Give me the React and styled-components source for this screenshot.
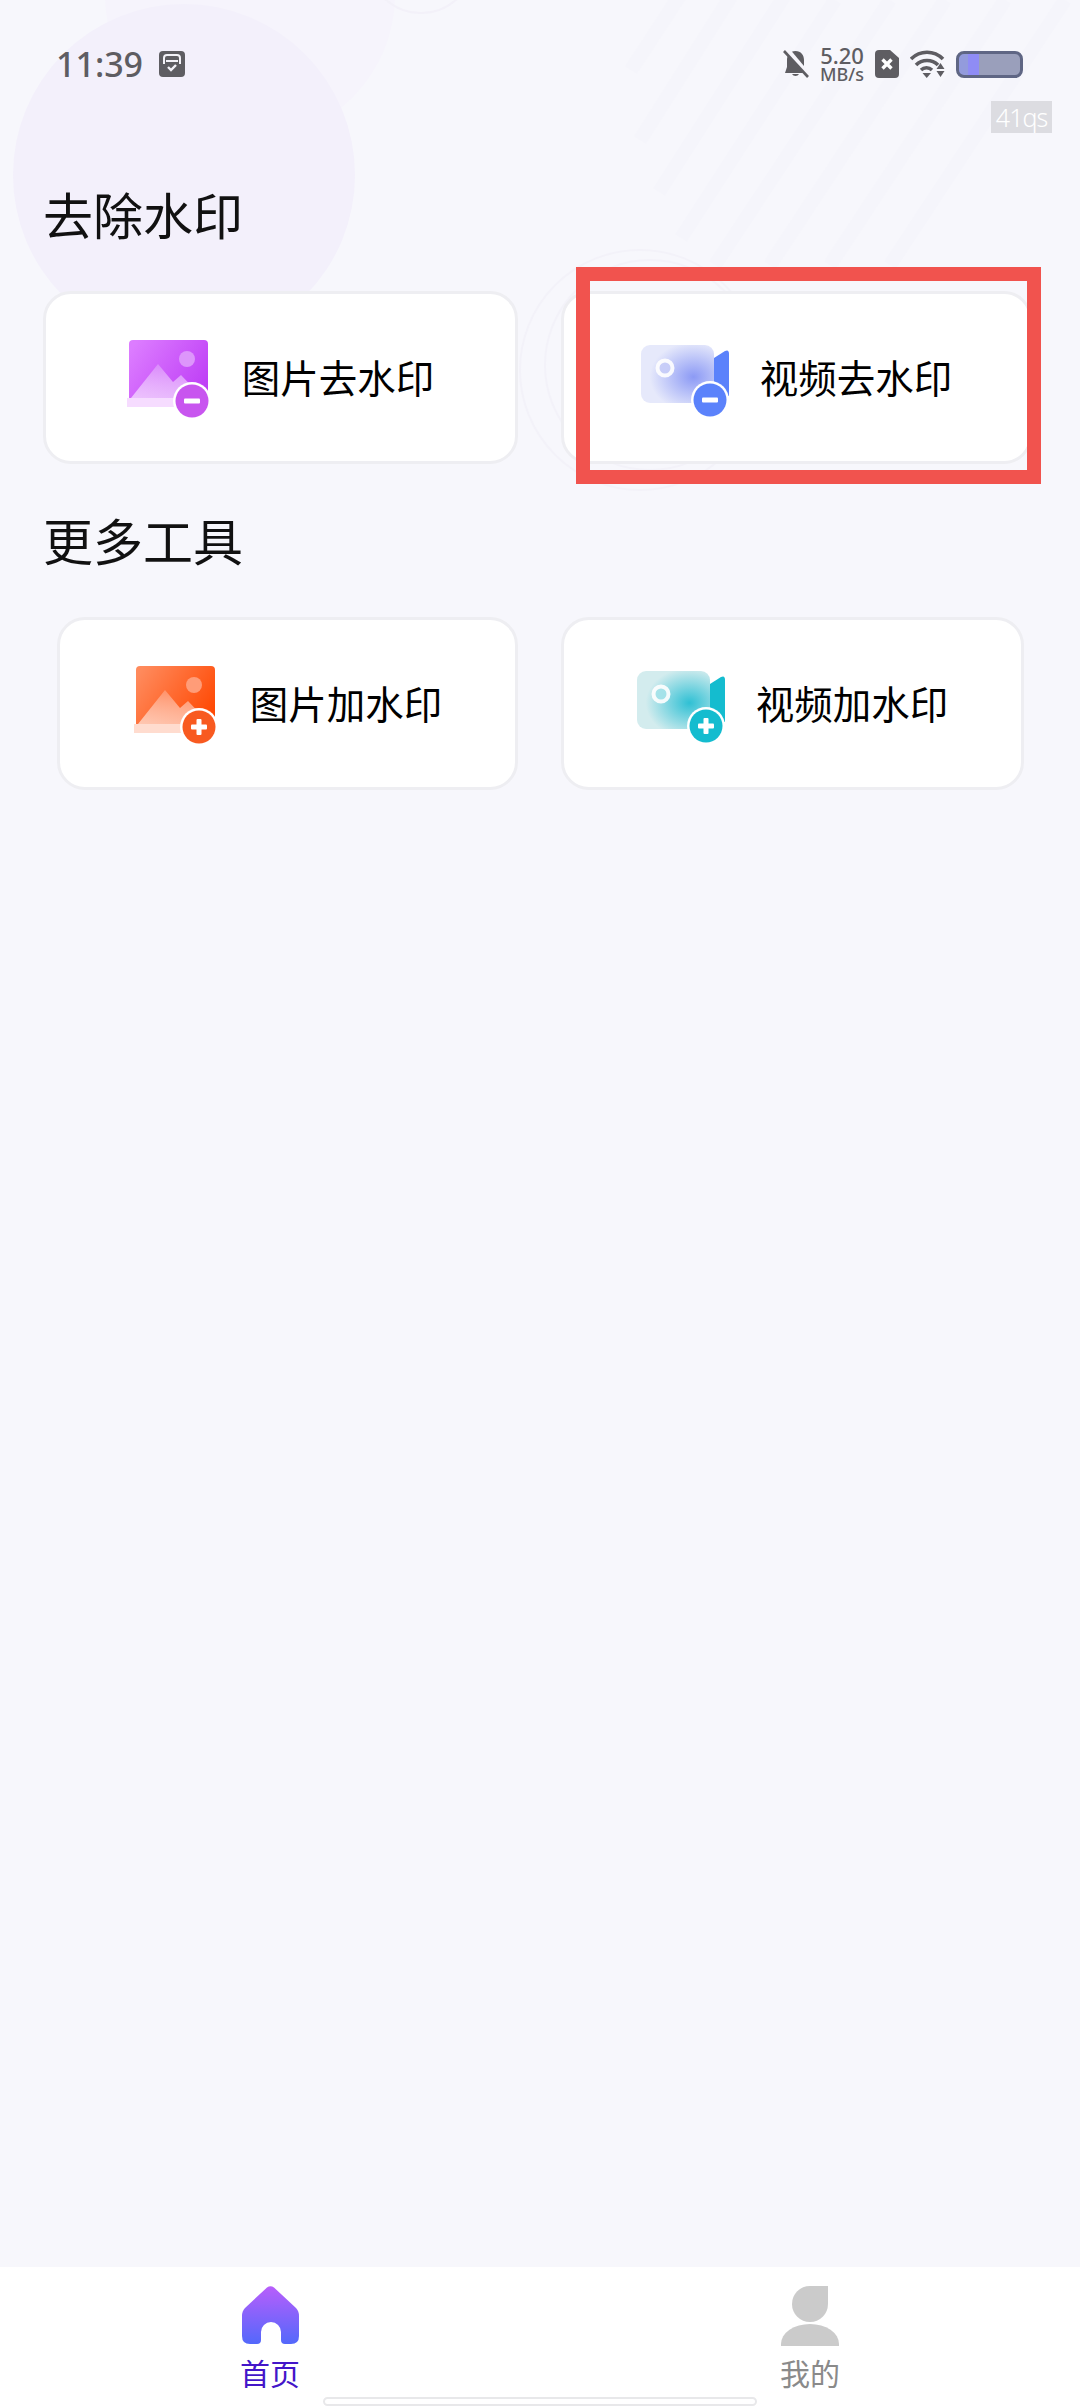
import React from "react"
import styled, { createGlobalStyle } from "styled-components"

const GlobalStyle = createGlobalStyle`
    html, body {
        margin: 0;
        padding: 0;
        background: #f7f7fc;
    }
    * {
        box-sizing: border-box;
    }
`

const Page = styled.div`
    position: relative;
    width: 1080px;
    height: 2408px;
    overflow: hidden;
    display: flex;
    flex-direction: column;
    background: #f7f7fc;
    font-family: "Noto Sans CJK SC", "Noto Sans", sans-serif;
`

const Backdrop = styled.svg`
    position: absolute;
    top: 0;
    left: 0;
`

const StatusBar = styled.div`
    position: relative;
    height: 181px;
    padding: 47px 57px 0 56px;
    display: flex;
    justify-content: space-between;
    align-items: flex-start;
    color: #5e5d62;
`

const StatusGroup = styled.div`
    display: flex;
    align-items: center;
    height: 34px;
    gap: ${({ $gap }) => $gap};
`

const Clock = styled.span`
    font-family: "Noto Sans", sans-serif;
    font-size: 34px;
    line-height: 34px;
    font-weight: 500;
    width: 87px;
`

const Speed = styled.div`
    display: flex;
    flex-direction: column;
    align-items: center;
    width: 44px;
    font-family: "Noto Sans", sans-serif;
    font-weight: 500;
`

const SpeedValue = styled.span`
    font-size: 22px;
    line-height: 20px;
`

const SpeedUnit = styled.span`
    font-size: 18px;
    line-height: 18px;
`

const Battery = styled.div`
    width: 67px;
    height: 27px;
    border: 3px solid #5f6684;
    border-radius: 8px;
    background: linear-gradient(to right, #939bdc 0 9px, #8f8cf5 9px 20px, #9a9fbb 20px);
`

const Fps = styled.div`
    position: absolute;
    top: 101px;
    left: 991px;
    width: 61px;
    height: 32px;
    background: #dcdce1;
    color: #fff;
    font-family: "Noto Sans", sans-serif;
    font-weight: 300;
    font-size: 25px;
    letter-spacing: -1px;
    line-height: 33px;
    text-align: center;
`

const Main = styled.main`
    position: relative;
    flex: 1;
`

const Heading = styled.h2`
    margin: ${({ $top }) => $top}px 0 40px 43px;
    height: 70px;
    font-size: 50px;
    line-height: 64px;
    font-weight: 400;
    color: #111;
`

const Row = styled.div`
    display: flex;
    gap: 43px;
    padding-left: ${({ $left }) => $left}px;
`

const Card = styled.div`
    width: ${({ $width }) => $width}px;
    height: 173px;
    display: flex;
    align-items: center;
    justify-content: center;
    gap: 31px;
    background: #fff;
    border: 3px solid #eeeef2;
    border-radius: 28px;
`

const CardLabel = styled.span`
    font-size: 38.5px;
    line-height: 50px;
    padding-bottom: 3px;
    color: #000;
`

const IconSvg = styled.svg`
    display: block;
    flex: none;
    filter: blur(0.4px);
`

const Highlight = styled.div`
    position: absolute;
    top: 267px;
    left: 576px;
    width: 465px;
    height: 217px;
    border: 14px solid #f1534e;
`

const TabBar = styled.nav`
    position: relative;
    height: 141px;
    padding-top: 19px;
    display: grid;
    grid-template-columns: 1fr 1fr;
    background: #fff;
`

const Tab = styled.div`
    display: flex;
    flex-direction: column;
    align-items: center;
    gap: 6px;
`

const TabIconBox = styled.div`
    height: 60px;
`

const TabLabel = styled.span`
    font-size: 30px;
    line-height: 40px;
    color: ${({ $active }) => ($active ? "#4316c9" : "#8a8a8a")};
`

const HomeIndicator = styled.div`
    position: absolute;
    left: 323px;
    bottom: 2px;
    width: 434px;
    height: 9px;
    background: #fff;
    border: 2px solid #e8e8ea;
    border-radius: 5px;
`

const Badge = ({ cx, cy, color, plus }) => (
    <g>
        <circle cx={cx} cy={cy} r="19" fill="#fff" />
        <circle cx={cx} cy={cy} r="16.5" fill={color} />
        <rect x={cx - 8} y={cy - 2.5} width="16" height="5" rx="1" fill="#fff" />
        {plus && <rect x={cx - 2.5} y={cy - 8} width="5" height="16" rx="1" fill="#fff" />}
    </g>
)

const ImageIcon = ({ id, from, to, badge, plate, mountain, plus, width = 84 }) => (
    <IconSvg width={width} height="80" viewBox="0 0 84 80">
        <defs>
            <linearGradient id={`${id}-body`} x1="0" y1="0.2" x2="1" y2="0.7">
                <stop offset="0" stopColor={from} />
                <stop offset="1" stopColor={to} />
            </linearGradient>
            <linearGradient id={`${id}-peak`} x1="0" y1="0" x2="0" y2="1">
                <stop offset="0" stopColor={mountain} stopOpacity="0.75" />
                <stop offset="1" stopColor="#fff" stopOpacity="0.6" />
            </linearGradient>
        </defs>
        <rect x="0" y="60" width="60" height="9" fill={plate} />
        <path d="M2 6 Q2 2 6 2 H77 Q81 2 81 6 V60 H2 Z" fill={`url(#${id}-body)`} />
        <circle cx="60" cy="21" r="8" fill={mountain} />
        <path d="M4 60 L31 26 L46 44 L54 37 L72 56 V60 Z" fill={`url(#${id}-peak)`} />
        <Badge cx={65} cy={63} color={badge} plus={plus} />
    </IconSvg>
)

const VideoIcon = ({ id, pale, core, accent, ring, plus }) => (
    <IconSvg width="88" height="80" viewBox="0 0 88 80">
        <defs>
            <radialGradient id={`${id}-body`} cx="0.72" cy="0.55" r="0.6">
                <stop offset="0" stopColor={core} />
                <stop offset="1" stopColor={pale} />
            </radialGradient>
        </defs>
        <rect x="0" y="7" width="73" height="58" rx="9" fill={`url(#${id}-body)`} />
        <circle cx="24" cy="30" r="7.5" fill={ring} stroke="#fff" strokeWidth="4" opacity="0.9" />
        <path d="M73 20 L84 13 Q88 11 88 16 V58 H73 Z" fill={accent} />
        <Badge cx={69} cy={62} color={accent} plus={plus} />
    </IconSvg>
)

const NotifyIcon = () => (
    <svg width="28" height="28" viewBox="0 0 28 28">
        <rect x="1" y="1" width="26" height="26" rx="4" fill="#5e5d62" />
        <path d="M6 14 V8 Q6 5 9 5 H19 Q22 5 22 8 V14" stroke="#f3f2f8" strokeWidth="2" fill="none" />
        <path d="M8 11 H20" stroke="#f3f2f8" strokeWidth="2" fill="none" />
        <path d="M10 17 L13 20 L18 15" stroke="#f3f2f8" strokeWidth="2.4" fill="none" />
    </svg>
)

const MuteIcon = () => (
    <svg width="26" height="28" viewBox="0 0 26 28">
        <path d="M12.5 1 C18 1 21 5 21 10 V17 L24 23 H2 L4 17 V10 C4 5 7 1 12.5 1 Z" fill="#5e5d62" />
        <path d="M9 24 A4 4 0 0 0 16 24 Z" fill="#5e5d62" />
        <path d="M3.5 -1 L26 26" stroke="#f6f5fb" strokeWidth="5" />
        <path d="M1 1 L25 27" stroke="#5e5d62" strokeWidth="2.6" />
    </svg>
)

const SimIcon = () => (
    <svg width="24" height="28" viewBox="0 0 24 28">
        <path d="M4 0 H15 L24 8 V24 Q24 28 20 28 H4 Q0 28 0 24 V4 Q0 0 4 0 Z" fill="#5e5d62" />
        <path d="M7.5 9.5 L16.5 18.5 M16.5 9.5 L7.5 18.5" stroke="#fff" strokeWidth="3.4" />
    </svg>
)

const WifiIcon = () => (
    <svg width="35" height="28" viewBox="0 0 35 28">
        <path d="M1 9 C10 0 24 0 33 9" fill="none" stroke="#5e5d62" strokeWidth="3.6" />
        <path d="M6 15 C12 9 22 9 28 15" fill="none" stroke="#5e5d62" strokeWidth="3.6" />
        <path d="M11 20 C14 17 19 17 22 20" fill="none" stroke="#5e5d62" strokeWidth="3.4" />
        <path d="M12.5 23 H21 L16.7 28 Z" fill="#5e5d62" />
        <path d="M30.5 13 L34.5 19 H26.5 Z M26.5 21 H34.5 L30.5 27 Z" fill="#5e5d62" />
    </svg>
)

const HomeIcon = () => (
    <svg width="57" height="58" viewBox="0 0 57 58">
        <defs>
            <linearGradient id="home-fill" x1="0" y1="0" x2="0" y2="1">
                <stop offset="0" stopColor="#b85efb" />
                <stop offset="1" stopColor="#5368fb" />
            </linearGradient>
        </defs>
        <path
            d="M25 1.5 Q28.5 -1 32 1.5 L54 22 Q57 25 57 30 V50 Q57 58 49 58 H43 Q39 58 39 54 V46 A10 10 0 0 0 19 46 V54 Q19 58 15 58 H8 Q0 58 0 50 V30 Q0 25 3 22 Z"
            fill="url(#home-fill)"
        />
    </svg>
)

const PersonIcon = () => (
    <svg width="58" height="60" viewBox="0 0 58 60">
        <path d="M29 0 H47 V18 A18 18 0 1 1 11 18 A18 18 0 0 1 29 0 Z" fill="#cbcbcb" />
        <path d="M0 60 V58 A29 20 0 0 1 58 58 V60 Z" fill="#cbcbcb" />
    </svg>
)

const stripes = [
    [631, 70, 690, -20],
    [640, 140, 735, -10],
    [659, 192, 785, -5],
    [681, 238, 835, 0],
    [715, 265, 890, 0],
    [770, 265, 945, 0],
    [830, 265, 1005, 0],
    [890, 265, 1065, 0],
]

const App = () => {
    return (
        <Page>
            <GlobalStyle />
            <Backdrop width="1080" height="560" viewBox="0 0 1080 560">
                <circle cx="250" cy="-5" r="145" fill="#f6f4fc" />
                <circle cx="184" cy="175" r="171" fill="#f3f0fb" />
                <circle cx="421" cy="-40" r="53" fill="none" stroke="#f3f1f9" strokeWidth="2" />
                <circle cx="640" cy="370" r="120" fill="none" stroke="#f3f2f9" strokeWidth="2" />
                <circle cx="650" cy="365" r="105" fill="none" stroke="#f3f2f9" strokeWidth="2" />
                {stripes.map(([x1, y1, x2, y2]) => (
                    <line key={x1} x1={x1} y1={y1} x2={x2} y2={y2} stroke="#f5f5fb" strokeWidth="14" />
                ))}
            </Backdrop>

            <StatusBar>
                <StatusGroup $gap="15px">
                    <Clock>11:39</Clock>
                    <NotifyIcon />
                </StatusGroup>
                <StatusGroup $gap="11px">
                    <MuteIcon />
                    <Speed>
                        <SpeedValue>5.20</SpeedValue>
                        <SpeedUnit>MB/s</SpeedUnit>
                    </Speed>
                    <SimIcon />
                    <WifiIcon />
                    <Battery />
                </StatusGroup>
            </StatusBar>
            <Fps>41qs</Fps>

            <Main>
                <Heading $top={0}>去除水印</Heading>
                <Row $left={43}>
                    <Card $width={475}>
                        <ImageIcon id="remove-image" from="#dc7cff" to="#bf40f6" badge="#c855ef" plate="#f6dcff" mountain="#dd96fb" />
                        <CardLabel>图片去水印</CardLabel>
                    </Card>
                    <Card $width={471}>
                        <VideoIcon id="remove-video" pale="#e6e9fb" core="#8c9af5" accent="#5b82fb" ring="#c7cdf8" />
                        <CardLabel>视频去水印</CardLabel>
                    </Card>
                </Row>

                <Heading $top={43}>更多工具</Heading>
                <Row $left={57}>
                    <Card $width={461}>
                        <ImageIcon id="add-image" from="#ff8a5c" to="#ff4a05" badge="#f85a20" plate="#ffdccf" mountain="#ff9c78" plus width={86} />
                        <CardLabel>图片加水印</CardLabel>
                    </Card>
                    <Card $width={463}>
                        <VideoIcon id="add-video" pale="#d3ecee" core="#2fc0d4" accent="#14bccf" ring="#a5e3ea" plus />
                        <CardLabel>视频加水印</CardLabel>
                    </Card>
                </Row>
            </Main>

            <TabBar>
                <Tab>
                    <TabIconBox>
                        <HomeIcon />
                    </TabIconBox>
                    <TabLabel $active>首页</TabLabel>
                </Tab>
                <Tab>
                    <TabIconBox>
                        <PersonIcon />
                    </TabIconBox>
                    <TabLabel>我的</TabLabel>
                </Tab>
                <HomeIndicator />
            </TabBar>

            <Highlight />
        </Page>
    )
}

export default App
